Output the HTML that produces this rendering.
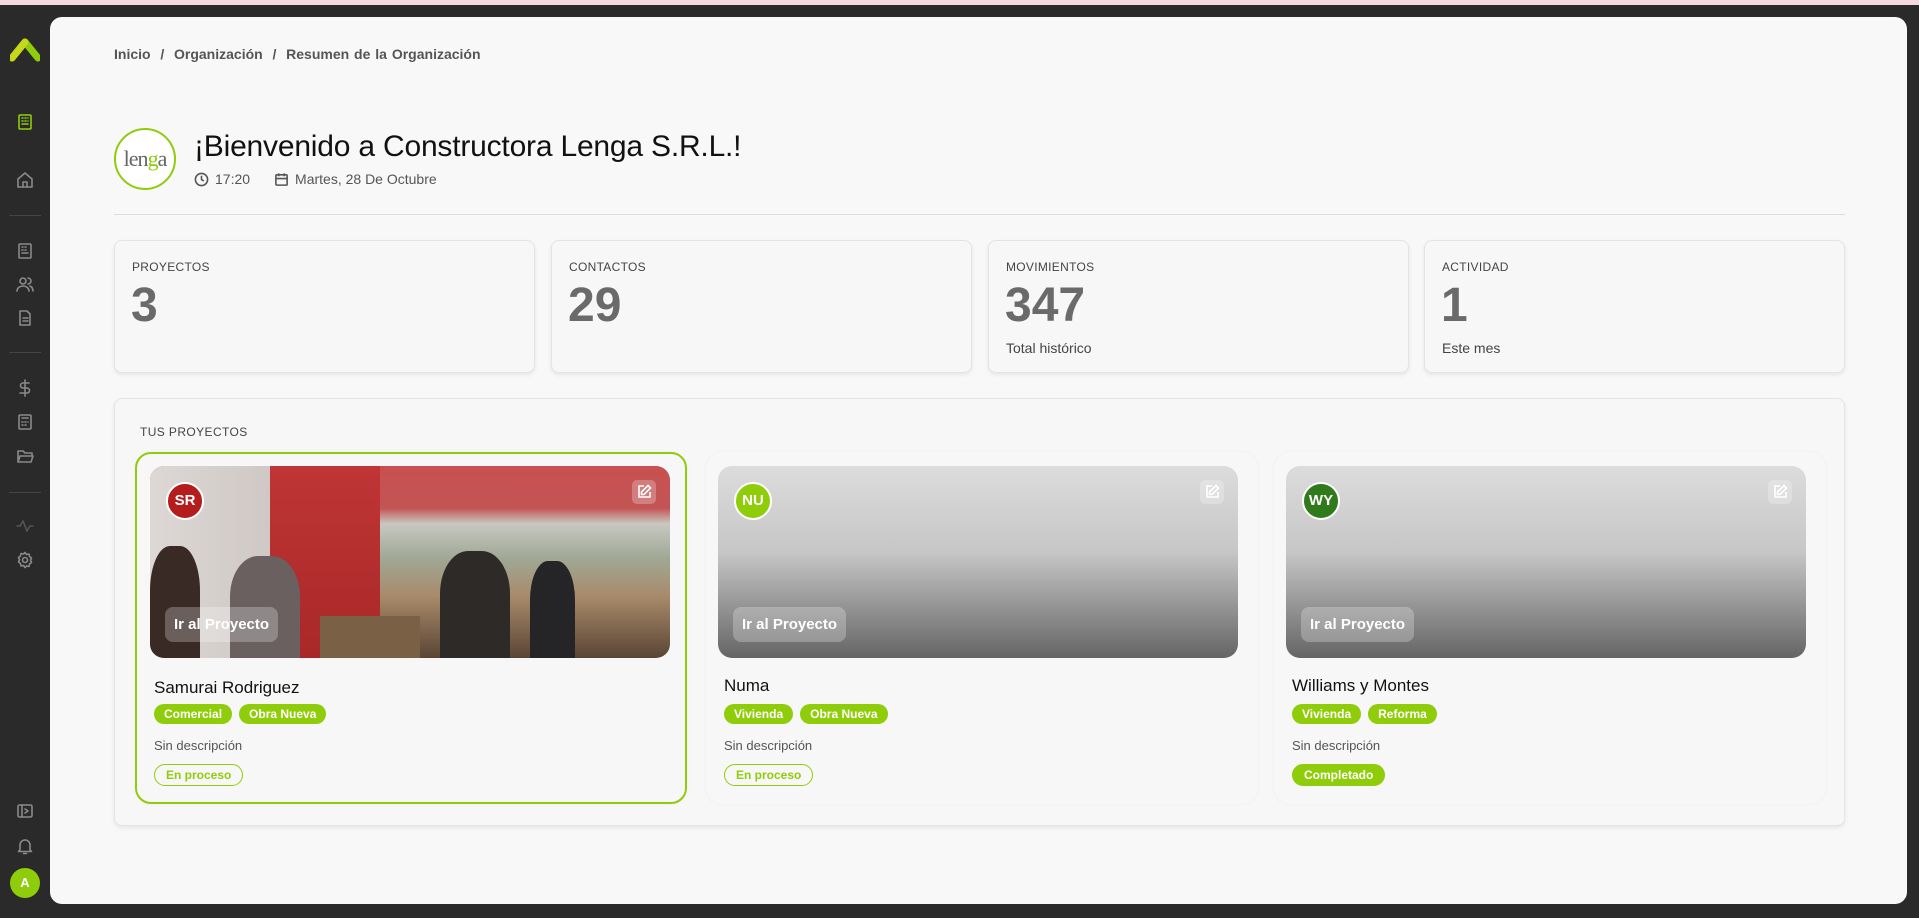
<!DOCTYPE html>
<html><head><meta charset="utf-8"><style>
*{box-sizing:border-box;margin:0;padding:0}
body{width:1919px;height:918px;background:#2a2a2a;font-family:"Liberation Sans",sans-serif;position:relative;overflow:hidden}
.top{position:absolute;left:0;top:0;width:1919px;height:5px;background:#f6d9dc}
.side svg{position:absolute;left:16px;width:18px;height:18px;fill:none;stroke:#8a8a8a;stroke-width:1.6;stroke-linecap:round;stroke-linejoin:round}
.sep{position:absolute;left:9px;width:32px;height:1px;background:#444}
.main{position:absolute;left:50px;top:17px;width:1857px;height:887px;background:#f8f8f8;border-radius:12px}
.a{position:absolute}
.bc{left:114px;top:46px;font-size:14px;color:#555;font-weight:bold;word-spacing:1px}
.logo{left:114px;top:128px;width:62px;height:62px;border:2px solid #8fcc0a;border-radius:50%;background:#fff;font-family:"Liberation Serif",serif;font-size:22px;color:#666;text-align:center;line-height:58px;letter-spacing:-1px}
.logo b{color:#8fcc0a;font-weight:normal}
h1{position:absolute;left:194px;top:130px;font-size:30px;font-weight:normal;color:#111;letter-spacing:-.2px}
.meta{left:194px;top:171px;font-size:14px;color:#555;display:flex;align-items:center;gap:6px}
.meta svg{width:15px;height:15px;fill:none;stroke:#555;stroke-width:1.7}
.hr{left:114px;top:214px;width:1731px;height:1px;background:#ddd}
.stat{top:240px;height:133px;width:421px;border:1px solid #e4e4e4;border-radius:8px;background:#f7f7f7;box-shadow:0 2px 4px rgba(0,0,0,.08)}
.stat .l{position:absolute;left:17px;top:19px;font-size:12px;color:#444;letter-spacing:.3px}
.stat .n{position:absolute;left:16px;top:37px;font-size:48px;font-weight:bold;color:#6a6a6a}
.stat .s{position:absolute;left:17px;top:99px;font-size:14px;color:#444}
.panel{left:114px;top:398px;width:1731px;height:428px;border:1px solid #e4e4e4;border-radius:8px;background:#f7f7f7;box-shadow:0 2px 4px rgba(0,0,0,.08)}
.tp{left:140px;top:425px;font-size:12px;color:#444;letter-spacing:.4px}
.card{top:452px;width:552px;height:352px;border-radius:16px;background:#f7f7f7;box-shadow:0 0 3px rgba(0,0,0,.05)}
.card.sel{border:2px solid #8fcc0a}
.img{position:absolute;left:14px;top:14px;width:520px;height:192px;border-radius:14px;overflow:hidden;background:linear-gradient(#dcdcdc 0%,#c6c6c6 45%,#9a9a9a 70%,#656565 100%)}
.av{position:absolute;left:16px;top:16px;width:38px;height:38px;border-radius:50%;border:2px solid #fff;color:#fff;font-weight:bold;font-size:15px;text-align:center;line-height:34px}
.go{position:absolute;left:15px;top:141px;padding:0 9px;height:35px;line-height:35px;border-radius:8px;background:rgba(255,255,255,.25);color:#fff;font-size:15px;font-weight:bold}
.ed{position:absolute;right:14px;top:14px;width:24px;height:24px;border-radius:5px;background:rgba(255,255,255,.25)}
.ed svg{width:16px;height:16px;margin:4px;fill:none;stroke:#fff;stroke-width:1.6}
.nm{position:absolute;left:18px;top:224px;font-size:17px;color:#111}
.tags{position:absolute;left:18px;top:252px;display:flex;gap:7px}
.tag{background:#8fcc0a;color:#fff;font-weight:bold;font-size:12px;padding:0 10px;height:20px;line-height:20px;border-radius:10px}
.ds{position:absolute;left:18px;top:286px;font-size:13px;color:#555}
.st{position:absolute;left:18px;top:312px;height:22px;line-height:20px;padding:0 11px;border-radius:11px;font-size:12px;font-weight:bold;border:1.5px solid #8fcc0a;color:#8fcc0a}
.st.f{background:#8fcc0a;color:#fff}
.p{position:absolute;border-radius:40% 40% 0 0}
</style></head><body>
<div class="top"></div>
<div class="side">
<svg style="top:38px;left:10px;width:30px;height:24px;stroke:none" viewBox="0 0 30 24"><path d="M2 20 L15 4 L28 20" stroke="#8fcc0a" stroke-width="7" fill="none" stroke-linecap="round" stroke-linejoin="round"/><path d="M2 20 L15 4" stroke="#c5d81a" stroke-width="7" fill="none" stroke-linecap="round"/></svg>
<svg style="top:113px;stroke:#8fcc0a" viewBox="0 0 18 18"><rect x="3" y="2" width="12" height="14" rx="1"/><path d="M6 5h1M9 5h1M12 5h0M6 8h1M9 8h1M12 8h0M6 11h6"/></svg>
<svg style="top:171px" viewBox="0 0 18 18"><path d="M2 8l7-6 7 6v8H2z"/><path d="M7 16v-5h4v5"/></svg>
<div class="sep" style="top:215px"></div>
<svg style="top:242px" viewBox="0 0 18 18"><rect x="3" y="2" width="12" height="14" rx="1"/><path d="M6 5h1M9 5h1M6 8h1M9 8h1M6 11h6"/></svg>
<svg style="top:275px" viewBox="0 0 18 18"><circle cx="7" cy="6" r="3"/><path d="M1 16c0-3 3-5 6-5s6 2 6 5M12 3a3 3 0 010 6M14 11c2 1 3 3 3 5"/></svg>
<svg style="top:309px" viewBox="0 0 18 18"><path d="M4 2h7l3 3v11H4z"/><path d="M7 9h5M7 12h5"/></svg>
<div class="sep" style="top:352px"></div>
<svg style="top:379px" viewBox="0 0 18 18"><path d="M9 1v16M13 4H7a2.5 2.5 0 000 5h4a2.5 2.5 0 010 5H4"/></svg>
<svg style="top:413px" viewBox="0 0 18 18"><rect x="3" y="2" width="12" height="14" rx="1"/><path d="M6 5h6M6 9h1M9 9h1M12 9h0M6 12h1M9 12h1"/></svg>
<svg style="top:447px" viewBox="0 0 18 18"><path d="M2 15V4h5l2 2h7v3M2 15l2-6h13l-2 6z"/></svg>
<div class="sep" style="top:492px"></div>
<svg style="top:517px;stroke:#555" viewBox="0 0 18 18"><path d="M1 9h3l3-5 4 10 3-5h3"/></svg>
<svg style="top:551px" viewBox="0 0 18 18"><circle cx="9" cy="9" r="2.5"/><path d="M9 1.5l1.5 2 2.5-.5.5 2.5 2 1.5-1 2.2 1 2.3-2 1.5-.5 2.5-2.5-.5L9 16.5l-1.5-2-2.5.5-.5-2.5-2-1.5 1-2.3-1-2.2 2-1.5.5-2.5 2.5.5z"/></svg>
<svg style="top:802px" viewBox="0 0 18 18"><rect x="2" y="3" width="14" height="12" rx="1.5"/><path d="M6 3v12M9 7l3 2-3 2"/></svg>
<svg style="top:837px" viewBox="0 0 18 18"><path d="M4 13V8a5 5 0 0110 0v5l1.5 1.5h-13zM7.5 16.5h3"/></svg>
<div style="position:absolute;left:10px;top:868px;width:30px;height:30px;border-radius:50%;background:#8fcc0a;color:#fff;font-weight:bold;font-size:13px;text-align:center;line-height:30px">A</div>
</div>
<div class="main"></div>
<div class="a bc">Inicio&nbsp; / &nbsp;Organización&nbsp; / &nbsp;Resumen de la Organización</div>
<div class="a logo">len<b>g</b>a</div>
<h1>¡Bienvenido a Constructora Lenga S.R.L.!</h1>
<div class="a meta"><svg viewBox="0 0 16 16"><circle cx="8" cy="8" r="6.5"/><path d="M8 4v4l2.5 1.5"/></svg>17:20<span style="width:12px"></span><svg viewBox="0 0 16 16"><rect x="2" y="3" width="12" height="11" rx="1"/><path d="M2 7h12M5 1.5v3M11 1.5v3"/></svg>Martes, 28 De Octubre</div>
<div class="a hr"></div>
<div class="a stat" style="left:114px"><div class="l">PROYECTOS</div><div class="n">3</div></div>
<div class="a stat" style="left:551px"><div class="l">CONTACTOS</div><div class="n">29</div></div>
<div class="a stat" style="left:988px"><div class="l">MOVIMIENTOS</div><div class="n">347</div><div class="s">Total histórico</div></div>
<div class="a stat" style="left:1424px"><div class="l">ACTIVIDAD</div><div class="n">1</div><div class="s">Este mes</div></div>
<div class="a panel"></div>
<div class="a tp">TUS PROYECTOS</div>

<div class="a card sel" style="left:135px"><div class="img" style="left:13px;top:12px;background:linear-gradient(#c85050 0%,#c35555 22%,#c8c8c0 30%,#a0a895 48%,#a88a6a 68%,#5a4535 100%)">
<div style="position:absolute;left:0;top:0;width:120px;height:192px;background:linear-gradient(90deg,#ddd8d5,#cfc8c5)"></div>
<div style="position:absolute;left:120px;top:0;width:110px;height:192px;background:linear-gradient(#c03535,#a82828)"></div>
<div class="p" style="left:0;top:80px;width:50px;height:112px;background:#3a2a25"></div>
<div class="p" style="left:80px;top:90px;width:70px;height:102px;background:#6a6060"></div>
<div class="p" style="left:290px;top:85px;width:70px;height:107px;background:#2e2a28"></div>
<div class="p" style="left:380px;top:95px;width:45px;height:97px;background:#252528"></div>
<div style="position:absolute;left:170px;top:150px;width:100px;height:42px;background:#7a6045"></div>
<div class="av" style="background:#b51c1c">SR</div><div class="go">Ir al Proyecto</div><div class="ed"><svg viewBox="0 0 16 16"><path d="M8 2H3v11h11V8M12 1.5l2.5 2.5L8 10.5H5.5V8z"/></svg></div></div>
<div class="nm" style="left:17px">Samurai Rodriguez</div><div class="tags" style="left:17px;top:250px"><span class="tag">Comercial</span><span class="tag">Obra Nueva</span></div><div class="ds" style="left:17px;top:284px">Sin descripción</div><div class="st" style="left:17px;top:310px">En proceso</div></div>

<div class="a card" style="left:706px"><div class="img" style="left:12px"><div class="av" style="background:#8fcc0a">NU</div><div class="go">Ir al Proyecto</div><div class="ed"><svg viewBox="0 0 16 16"><path d="M8 2H3v11h11V8M12 1.5l2.5 2.5L8 10.5H5.5V8z"/></svg></div></div>
<div class="nm">Numa</div><div class="tags"><span class="tag">Vivienda</span><span class="tag">Obra Nueva</span></div><div class="ds">Sin descripción</div><div class="st">En proceso</div></div>

<div class="a card" style="left:1274px"><div class="img" style="left:12px"><div class="av" style="background:#2f7a1a">WY</div><div class="go">Ir al Proyecto</div><div class="ed"><svg viewBox="0 0 16 16"><path d="M8 2H3v11h11V8M12 1.5l2.5 2.5L8 10.5H5.5V8z"/></svg></div></div>
<div class="nm">Williams y Montes</div><div class="tags"><span class="tag">Vivienda</span><span class="tag">Reforma</span></div><div class="ds">Sin descripción</div><div class="st f">Completado</div></div>
</body></html>
